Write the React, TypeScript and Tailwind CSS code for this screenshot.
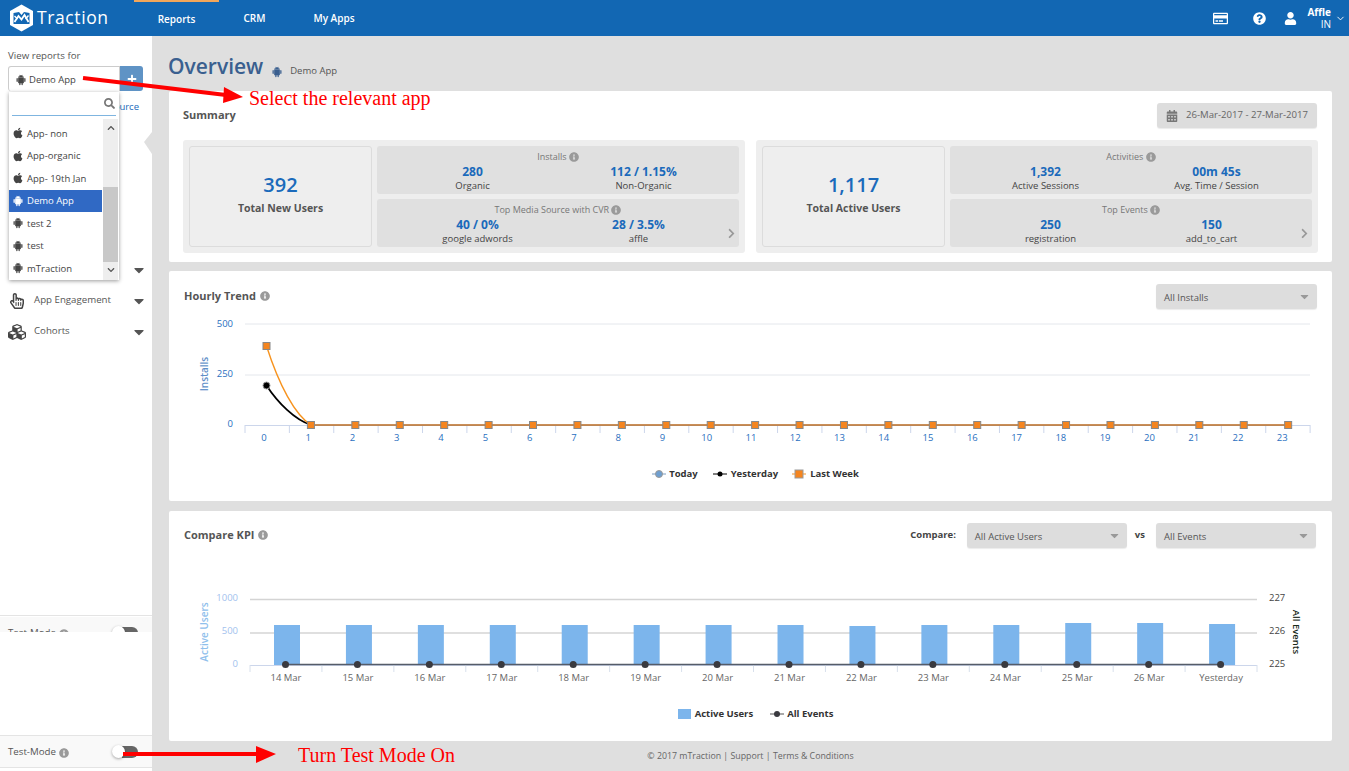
import React from "react";
import { AiFillAndroid } from "react-icons/ai";
import {
  FaApple,
  FaCalendarAlt,
  FaCaretDown,
  FaChevronDown,
  FaChevronRight,
  FaChevronUp,
  FaCubes,
  FaInfoCircle,
  FaPlus,
  FaQuestionCircle,
  FaRegCreditCard,
  FaRegHandPointer,
  FaSearch,
  FaUser,
} from "react-icons/fa";
import { FiChevronDown } from "react-icons/fi";

const apps = [
  { name: "App- non", ios: true },
  { name: "App-organic", ios: true },
  { name: "App- 19th Jan", ios: true },
  { name: "Demo App", ios: false, active: true },
  { name: "test 2", ios: false },
  { name: "test", ios: false },
  { name: "mTraction", ios: false },
];

const hours = Array.from({ length: 24 }, (_, i) => i);

const kpiBars = [
  ["14 Mar", 625],
  ["15 Mar", 625],
  ["16 Mar", 625],
  ["17 Mar", 625],
  ["18 Mar", 625],
  ["19 Mar", 625],
  ["20 Mar", 625],
  ["21 Mar", 625],
  ["22 Mar", 626],
  ["23 Mar", 625],
  ["24 Mar", 625],
  ["25 Mar", 623],
  ["26 Mar", 623],
  ["Yesterday", 624],
] as const;

const Info = ({ className = "" }: { className?: string }) => (
  <FaInfoCircle className={`inline-block text-[#9a9a9a] ${className}`} size={10} />
);

const Logo = () => (
  <div className="flex items-center">
    <svg width="25" height="28" viewBox="0 0 25 28" className="ml-[9px]">
      <polygon points="12.5,0.5 24,7 24,21 12.5,27.5 1,21 1,7" fill="#fff" />
      <path d="M4.5 9 L10 8 L12.5 11 L15 8 L20.5 9 L20.5 20 L4.5 20 Z" fill="#1267b3" />
      <path d="M5.5 18 L9.5 12 L12.5 15.5 L15.5 11 L19.5 18" fill="none" stroke="#fff" strokeWidth="1.8" />
      <path d="M5.5 12 L8.5 15 M16.5 15 L19.5 11.5" stroke="#fff" strokeWidth="1.4" />
    </svg>
    <span className="ml-[3px] text-[17.5px] leading-none tracking-[0.6px] text-white">Traction</span>
  </div>
);

const TopNav = () => (
  <header className="flex h-9 shrink-0 items-stretch bg-[#1267b3] text-white">
    <div className="flex w-[134px] items-center">
      <Logo />
    </div>
    <nav className="flex text-[10px] font-semibold">
      <a className="flex w-[85px] items-center justify-center border-t-2 border-[#f2a65a]">Reports</a>
      <a className="flex w-[71px] items-center justify-center">CRM</a>
      <a className="ml-[4px] flex w-[80px] items-center justify-center">My Apps</a>
    </nav>
    <div className="ml-auto flex items-center pr-[3px]">
      <FaRegCreditCard size={15} />
      <FaQuestionCircle size={13} className="ml-[25px]" />
      <FaUser size={13} className="ml-[18px]" />
      <div className="ml-[10px] text-right text-[10px] leading-[12px]">
        <div className="font-bold">Affle</div>
        <div>IN</div>
      </div>
      <FiChevronDown size={11} className="ml-[4px]" />
    </div>
  </header>
);

const ToggleRow = () => (
  <div className="flex h-[31px] items-center bg-[#f9f9f9] pl-2 text-[9.7px] text-[#555]">
    <span className="pt-[2px]">Test-Mode</span>
    <Info className="ml-[3px] mt-[2px]" />
    <span className="relative ml-[43px] flex h-[12px] w-[26px] items-center">
      <span className="absolute right-0 h-[12px] w-[16px] rounded-r-full bg-[#666]" />
      <span className="absolute left-0 h-[13px] w-[13px] rounded-full bg-white shadow-[0_1px_3px_rgba(0,0,0,0.35)]" />
    </span>
  </div>
);

const MenuRow = ({ icon, label }: { icon?: React.ReactNode; label?: string }) => (
  <div className="flex h-[31px] items-center pr-[5px] text-[9.7px] text-[#555]">
    <span className="flex w-[34px] justify-center text-[#444]">{icon}</span>
    <span>{label}</span>
    <FaCaretDown size={16} className="ml-auto text-[#555]" />
  </div>
);

const AppDropdown = () => (
  <div className="absolute left-[9px] top-[56px] z-10 w-[110px] bg-white shadow-[0_1px_4px_rgba(0,0,0,0.4)]">
    <div className="mx-[3px] flex h-[24px] items-center justify-end border-b border-[#7fb5e0] pr-[1px]">
      <FaSearch size={11} className="text-[#777]" />
    </div>
    <div className="mt-[3px] flex h-[161px]">
      <ul className="mt-[3px] w-[93px] text-[9.5px] text-[#444]">
        {apps.map((a) => (
          <li
            key={a.name}
            className={`flex h-[22.5px] items-center gap-[3px] pl-[3px] ${a.active ? "bg-[#3069c4] text-white" : ""}`}
          >
            {a.ios ? <FaApple size={12} /> : <AiFillAndroid size={12} />}
            <span className="pt-[1px]">{a.name}</span>
          </li>
        ))}
      </ul>
      <div className="ml-[1px] flex w-[15px] flex-col items-center bg-[#eeeeee]">
        <FaChevronUp size={8} className="mt-[5px] text-[#555]" />
        <div className="mt-[55px] h-[75px] w-full bg-[#c8c8c8]" />
        <FaChevronDown size={8} className="mt-[4px] text-[#555]" />
      </div>
    </div>
  </div>
);

const Sidebar = () => (
  <aside className="relative flex w-[152px] shrink-0 flex-col bg-white">
    <svg width="8" height="22" viewBox="0 0 8 22" className="absolute right-0 top-[96px]">
      <polygon points="0,10 8,0 8,22" fill="#dfdfdf" />
    </svg>
    <div className="pl-2 pt-[14px] text-[9.7px] leading-[12px] text-[#555]">View reports for</div>
    <div className="ml-2 mt-[4px] flex h-[25px] w-[135px]">
      <div className="flex w-[112px] items-center gap-[2px] rounded-l-[3px] border border-b-0 border-[#ccc] pl-[6px] pt-[2px] text-[9.5px] text-[#444]">
        <AiFillAndroid size={12} />
        Demo App
      </div>
      <div className="flex flex-1 items-center justify-center rounded-r-[3px] bg-[#5f93c5] text-white">
        <FaPlus size={10} />
      </div>
    </div>
    <div className="mt-[10px] pr-[13px] text-right text-[9.5px] leading-[12px] text-[#1a6abb]">Source</div>
    <AppDropdown />
    <div className="mt-[141px]">
      <MenuRow />
      <MenuRow icon={<FaRegHandPointer size={16} />} label="App Engagement" />
      <MenuRow icon={<FaCubes size={18} />} label="Cohorts" />
    </div>
    <div className="mt-auto h-[17px] overflow-hidden border-t border-[#e4e4e4]">
      <div className="pt-[1px]">
        <ToggleRow />
      </div>
    </div>
    <div className="mb-[3px] mt-[103px] border-y border-[#e4e4e4]">
      <ToggleRow />
    </div>
  </aside>
);

const Metric = ({ value, label }: { value: string; label: string }) => (
  <div className="flex-1 text-center">
    <div className="text-[12px] font-bold leading-[15px] text-[#1a6abb]">{value}</div>
    <div className="text-[9.5px] leading-[13px] text-[#444]">{label}</div>
  </div>
);

const MetricRow = ({
  title,
  a,
  b,
  more,
}: {
  title: string;
  a: [string, string];
  b: [string, string];
  more?: boolean;
}) => (
  <div className="relative h-[48px] rounded-[3px] bg-[#e0e0e0] pt-[4px]">
    <div className="text-center text-[9px] leading-[13px] text-[#777]">
      {title} <Info className="-mt-[2px]" />
    </div>
    <div className={`mt-[1px] flex ${more ? "px-[20px]" : "px-[10px]"}`}>
      <Metric value={a[0]} label={a[1]} />
      <Metric value={b[0]} label={b[1]} />
    </div>
    {more && <FaChevronRight size={11} className="absolute right-[2px] top-[29px] text-[#999]" />}
  </div>
);

const SummaryBlock = ({
  total,
  label,
  rows,
}: {
  total: string;
  label: string;
  rows: React.ComponentProps<typeof MetricRow>[];
}) => (
  <div className="grid h-[113px] grid-cols-[183px_1fr] gap-[5px] rounded-[3px] bg-[#eeeeee] p-[6px]">
    <div className="flex flex-col items-center justify-center rounded-[3px] border border-[#dcdcdc] pb-[5px]">
      <div className="text-[20px] font-semibold leading-[28px] text-[#1a6abb]">{total}</div>
      <div className="mt-[2px] text-[10.5px] font-bold text-[#555]">{label}</div>
    </div>
    <div className="flex flex-col gap-[5px]">
      {rows.map((r) => (
        <MetricRow key={r.title} {...r} />
      ))}
    </div>
  </div>
);

const GraySelect = ({ label, w }: { label: string; w: string }) => (
  <div className={`flex h-[25px] items-center justify-between rounded-[3px] bg-[#dddddd] pl-[8px] pr-[6px] text-[9.5px] text-[#555] shadow-[0_1px_1px_rgba(0,0,0,0.08)] ${w}`}>
    <span className="pt-[3px]">{label}</span>
    <FaCaretDown size={13} className="text-[#999]" />
  </div>
);

const HourlyChart = () => {
  const px = (i: number) => 266.5 + i * 44.42;
  return (
    <svg viewBox="169 309 1163 151" className="block h-[151px] w-full" fontFamily="'Open Sans', sans-serif">
      {[324, 375].map((y) => (
        <line key={y} x1="245" x2="1310" y1={y} y2={y} stroke="#e4e7ec" />
      ))}
      <line x1="245" x2="1310" y1="425.5" y2="425.5" stroke="#ccd6eb" />
      {Array.from({ length: 25 }, (_, i) => (
        <line key={i} x1={245 + i * 44.38} x2={245 + i * 44.38} y1="425" y2="433" stroke="#ccd6eb" />
      ))}
      {[["500", 327], ["250", 377], ["0", 427]].map(([t, y]) => (
        <text key={t} x="233" y={y} textAnchor="end" fontSize="9.5" fill="#2a6fc0">{t}</text>
      ))}
      <text transform="translate(208 374) rotate(-90)" textAnchor="middle" fontSize="10" fontWeight="600" fill="#5f8fc8">Installs</text>
      {hours.map((h) => (
        <text key={h} x={264 + h * 44.27} y="441" textAnchor="middle" fontSize="9.5" fill="#2a6fc0">{h}</text>
      ))}
      <path d="M266.5 385.5 C278 403 295 420 311 425" fill="none" stroke="#000" strokeWidth="1.8" />
      <path d="M266.5 346 C279 385 295 415 311 425" fill="none" stroke="#f7931e" strokeWidth="1.4" />
      <line x1="311" x2="1288" y1="425" y2="425" stroke="#b86a20" strokeWidth="1.4" />
      <circle cx="266.5" cy="385.5" r="3.5" fill="#000" stroke="#999" />
      {hours.map((h) => (
        <rect key={h} x={px(h) - 3.5} y={(h === 0 ? 346 : 425) - 3.5} width="7" height="7" fill="#f5851f" stroke="#888" />
      ))}
    </svg>
  );
};

const KpiChart = () => (
  <svg viewBox="169 548 1163 155" className="block h-[155px] w-full" fontFamily="'Open Sans', sans-serif">
    {[599.5, 633].map((y) => (
      <line key={y} x1="250" x2="1257" y1={y} y2={y} stroke="#d4d4d4" strokeWidth="1.6" />
    ))}
    <line x1="250" x2="1257" y1="665.5" y2="665.5" stroke="#ccd6eb" />
    {Array.from({ length: 15 }, (_, i) => (
      <line key={i} x1={250 + i * 71.93} x2={250 + i * 71.93} y1="665" y2="672" stroke="#d8e0ec" />
    ))}
    {[["1000", 601], ["500", 634], ["0", 667]].map(([t, y]) => (
      <text key={t} x="238" y={y} textAnchor="end" fontSize="9.5" fill="#a3c2ee">{t}</text>
    ))}
    {[["227", 601], ["226", 634], ["225", 667]].map(([t, y]) => (
      <text key={t} x="1269" y={y} fontSize="9.5" fill="#444">{t}</text>
    ))}
    <text transform="translate(208 632) rotate(-90)" textAnchor="middle" fontSize="10" fontWeight="600" fill="#8fc0ec">Active Users</text>
    <text transform="translate(1293 632) rotate(90)" textAnchor="middle" fontSize="9.5" fontWeight="600" fill="#1a2a1a">All Events</text>
    {kpiBars.map(([label, top], i) => (
      <g key={label}>
        <rect x={274 + i * 71.93} y={top} width="26" height={665 - top} fill="#7cb5ec" />
        <text x={286 + i * 71.93} y="681" textAnchor="middle" fontSize="9.5" fill="#666">{label}</text>
      </g>
    ))}
    <line x1="285.5" x2="1221" y1="664.5" y2="664.5" stroke="#555c68" strokeWidth="1.4" />
    {kpiBars.map(([label], i) => (
      <circle key={label} cx={285.5 + i * 71.93} cy="664.5" r="3.5" fill="#3a3a3f" />
    ))}
  </svg>
);

const Legend = ({ children }: { children: React.ReactNode }) => (
  <div className="flex items-center justify-center pl-[10px] text-[9.5px] font-bold text-[#333]">{children}</div>
);

const Annotations = () => (
  <>
    <svg className="pointer-events-none absolute left-0 top-0 z-20" width="300" height="771" viewBox="0 0 300 771">
      <line x1="83" y1="78" x2="226" y2="95" stroke="#ff0000" strokeWidth="4" />
      <polygon points="224,87 243,97 223,103" fill="#ff0000" />
      <line x1="123" y1="754" x2="258" y2="754" stroke="#ff0000" strokeWidth="4" />
      <polygon points="256,746 276,754 256,763" fill="#ff0000" />
    </svg>
    <div className="absolute left-[249px] top-[86px] z-20 font-['Liberation_Serif',serif] text-[20px] leading-[24px] text-[#ff0000]">
      Select the relevant app
    </div>
    <div className="absolute left-[298px] top-[743px] z-20 font-['Liberation_Serif',serif] text-[20px] leading-[24px] text-[#ff0000]">
      Turn Test Mode On
    </div>
  </>
);

export default function App() {
  return (
    <div className="relative flex h-[771px] w-[1349px] flex-col overflow-hidden bg-[#dfdfdf] font-['Open_Sans',sans-serif]">
      <TopNav />
      <div className="flex min-h-0 flex-1">
        <Sidebar />
        <main className="flex-1 px-[17px]">
          <div className="flex h-[55px] items-center pt-[7px]">
            <h1 className="-ml-[1px] text-[21px] font-semibold text-[#3a5f8f]">Overview</h1>
            <AiFillAndroid size={12} className="ml-[8px] mt-[9px] text-[#3a5f8f]" />
            <span className="ml-[7px] mt-[9px] text-[9.5px] text-[#555]">Demo App</span>
          </div>

          <section className="h-[171px] rounded-[2px] bg-white px-[14px] pt-[12px]">
            <div className="flex h-[25px] items-center justify-between">
              <h2 className="text-[11px] font-bold text-[#555]">Summary</h2>
              <div className="mr-[1px] flex h-[25px] w-[160px] items-center rounded-[3px] bg-[#dddddd] pl-[9px] text-[9.6px] text-[#666] shadow-[0_1px_1px_rgba(0,0,0,0.08)]">
                <FaCalendarAlt size={12} className="text-[#777]" />
                <span className="ml-[8px]">26-Mar-2017 - 27-Mar-2017</span>
              </div>
            </div>
            <div className="mt-[12px] grid grid-cols-2 gap-[11px]">
              <SummaryBlock
                total="392"
                label="Total New Users"
                rows={[
                  { title: "Installs", a: ["280", "Organic"], b: ["112 / 1.15%", "Non-Organic"] },
                  { title: "Top Media Source with CVR", a: ["40 / 0%", "google adwords"], b: ["28 / 3.5%", "affle"], more: true },
                ]}
              />
              <SummaryBlock
                total="1,117"
                label="Total Active Users"
                rows={[
                  { title: "Activities", a: ["1,392", "Active Sessions"], b: ["00m 45s", "Avg. Time / Session"] },
                  { title: "Top Events", a: ["250", "registration"], b: ["150", "add_to_cart"], more: true },
                ]}
              />
            </div>
          </section>

          <section className="mt-[9px] h-[230px] rounded-[2px] bg-white pt-[13px]">
            <div className="flex items-center justify-between px-[15px]">
              <h2 className="text-[11px] font-bold text-[#555]">
                Hourly Trend <Info className="-mt-[2px] ml-[1px]" />
              </h2>
              <GraySelect label="All Installs" w="w-[161px]" />
            </div>
            <HourlyChart />
            <div className="mt-[7px]">
              <Legend>
                <svg width="14" height="10" className="mr-[3px]">
                  <line x1="0" x2="14" y1="5" y2="5" stroke="#7a9cc0" />
                  <circle cx="7" cy="5" r="3.5" fill="#6f9fd0" stroke="#999" />
                </svg>
                Today
                <svg width="14" height="10" className="ml-[15px] mr-[4px]">
                  <line x1="0" x2="14" y1="5" y2="5" stroke="#000" />
                  <circle cx="7" cy="5" r="2.5" fill="#000" />
                </svg>
                Yesterday
                <svg width="14" height="10" className="ml-[14px] mr-[4px]">
                  <line x1="0" x2="14" y1="5" y2="5" stroke="#f7931e" />
                  <rect x="3" y="1" width="8" height="8" fill="#f5851f" stroke="#999" />
                </svg>
                Last Week
              </Legend>
            </div>
          </section>

          <section className="mt-[10px] h-[230px] rounded-[2px] bg-white pt-[12px]">
            <div className="flex items-center justify-between pl-[15px] pr-[16px]">
              <h2 className="text-[11px] font-bold text-[#555]">
                Compare KPI <Info className="-mt-[2px] ml-[1px]" />
              </h2>
              <div className="flex items-center text-[9.5px] font-bold text-[#444]">
                <span className="mr-[11px]">Compare:</span>
                <GraySelect label="All Active Users" w="w-[160px] font-normal" />
                <span className="ml-[8px] mr-[11px]">vs</span>
                <GraySelect label="All Events" w="w-[160px] font-normal" />
              </div>
            </div>
            <KpiChart />
            <div className="mt-[4px]">
              <Legend>
                <span className="mr-[4px] h-[10px] w-[13px] bg-[#7cb5ec]" />
                Active Users
                <svg width="14" height="10" className="ml-[17px] mr-[3px]">
                  <line x1="0" x2="14" y1="5" y2="5" stroke="#555" />
                  <circle cx="7" cy="5" r="3" fill="#3a3a3f" />
                </svg>
                All Events
              </Legend>
            </div>
          </section>

          <footer className="mt-[9px] text-center text-[8.8px] text-[#666]">
            © 2017 mTraction | Support | Terms &amp; Conditions
          </footer>
        </main>
      </div>
      <Annotations />
    </div>
  );
}
